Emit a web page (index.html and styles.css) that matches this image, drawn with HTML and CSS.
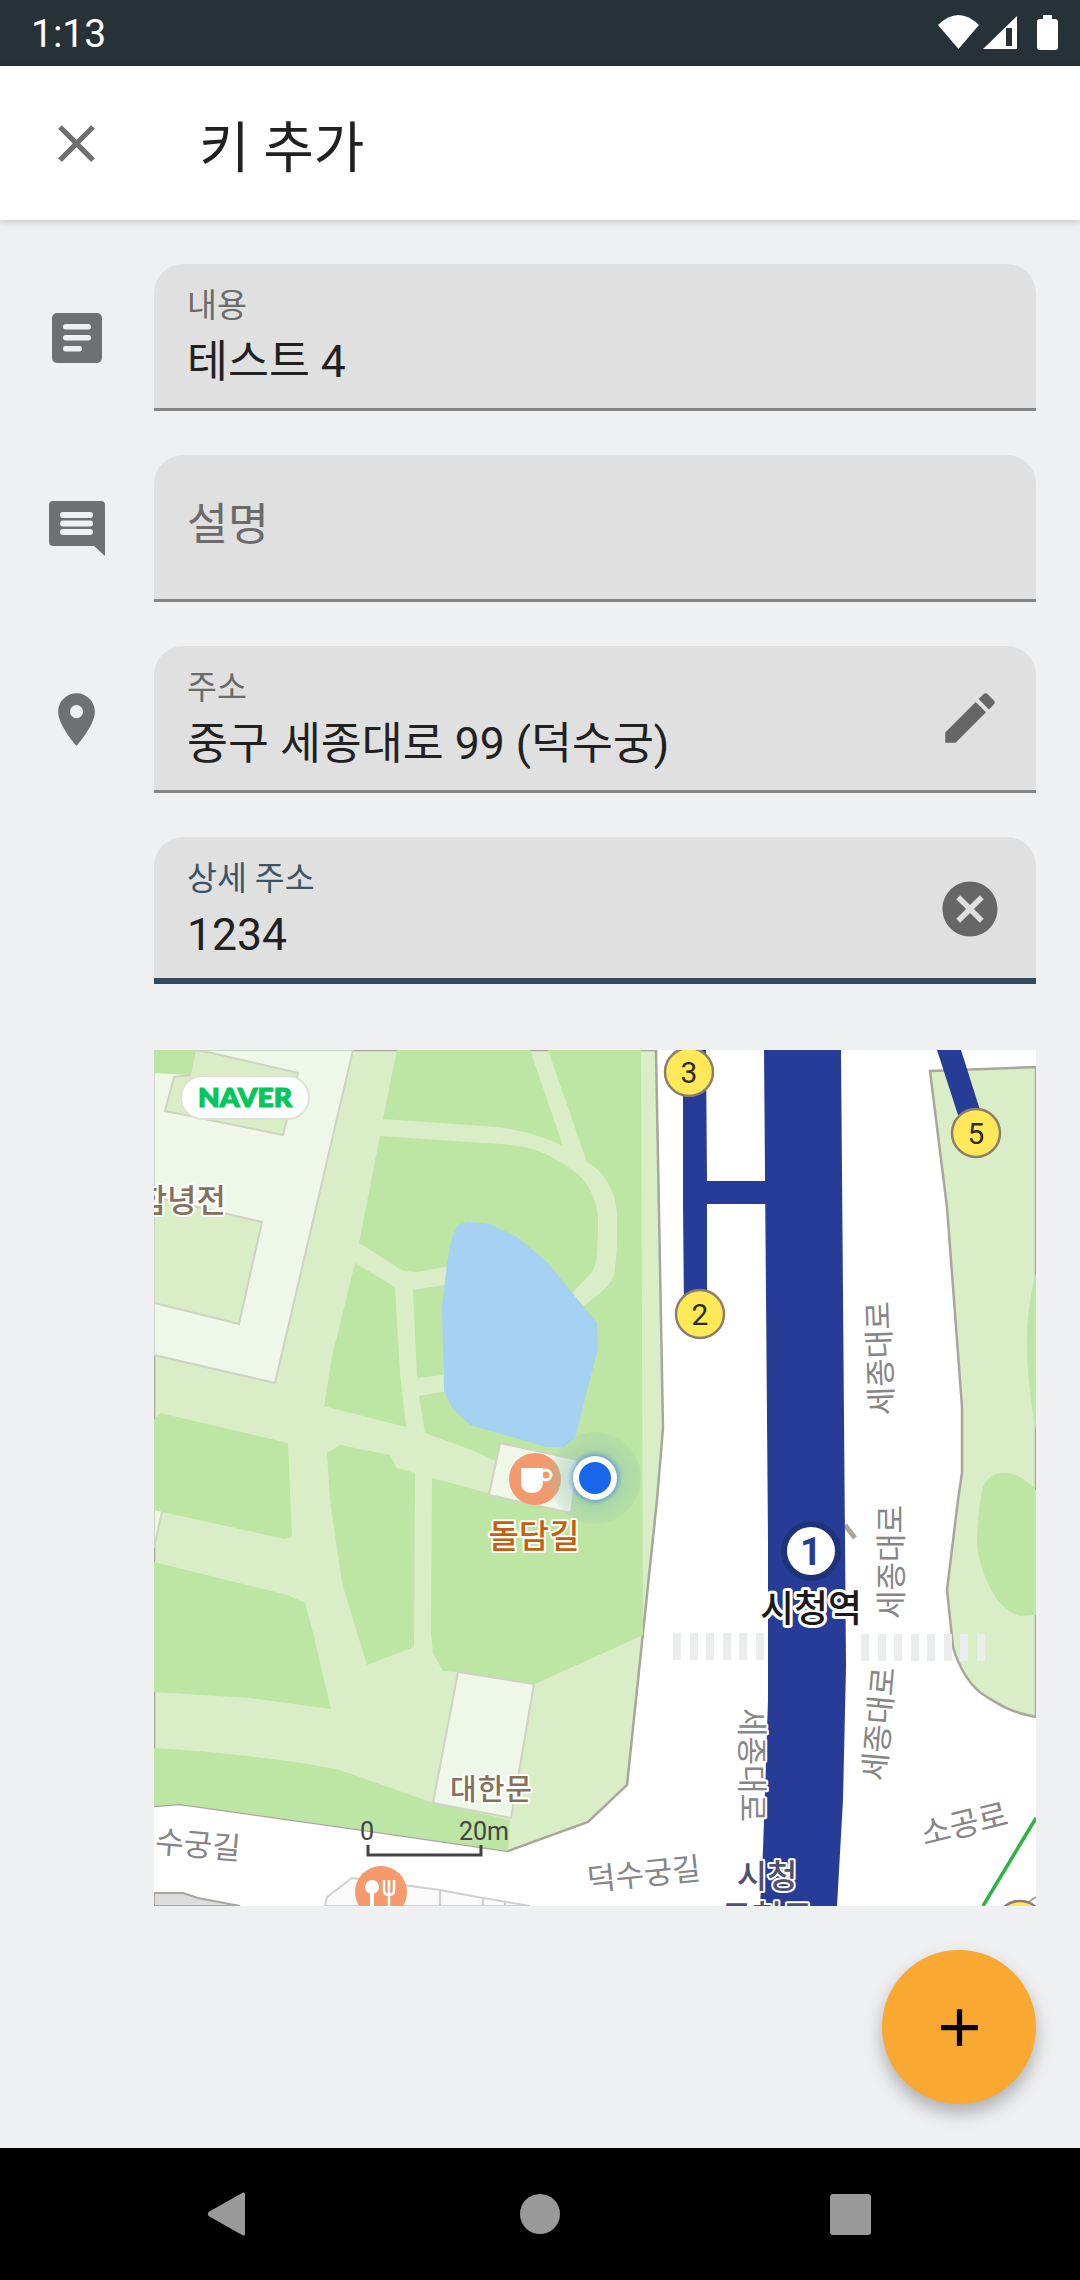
FILE: index.html
```html
<!DOCTYPE html>
<html lang="ko">
<head>
  <meta charset="UTF-8" />
  <meta name="viewport" content="width=device-width, initial-scale=1.0" />
  <title>키 추가</title>
  <link rel="stylesheet" href="styles.css">
</head>
<body>
  <div class="screen">
    <div class="status-bar">
      <span class="clock">1:13</span>
      <svg class="status-icons" width="120" height="66" viewBox="938 0 120 66">
        <path d="M938 25Q958.5 5 979 25L958.5 49Z" fill="#fff"/>
        <path d="M983 49L1017 16V49Z" fill="#fff"/>
        <rect x="1006" y="28" width="6" height="18" fill="#263238"/>
        <path d="M1043 15h9v4h3a3 3 0 0 1 3 3v25a3 3 0 0 1-3 3h-15a3 3 0 0 1-3-3v-25a3 3 0 0 1 3-3h3z" fill="#fff"/>
      </svg>
    </div>

    <div class="app-bar">
      <svg class="close-icon" viewBox="0 0 24 24" width="63" height="63">
        <path d="M19 6.41L17.59 5 12 10.59 6.41 5 5 6.41 10.59 12 5 17.59 6.41 19 12 13.41 17.59 19 19 17.59 13.41 12z"/>
      </svg>
      <h1 class="title">키 추가</h1>
    </div>

    <div class="content">
      <div class="row">
        <svg class="row-icon" viewBox="45 305 63 63" width="63" height="63">
          <rect x="52" y="312" width="50" height="50" rx="5" fill="#6f7073"/>
          <rect x="63" y="323" width="28" height="5.5" rx="2.7" fill="#eff0f2"/>
          <rect x="63" y="334" width="28" height="5.5" rx="2.7" fill="#eff0f2"/>
          <rect x="63" y="345" width="19" height="5.5" rx="2.7" fill="#eff0f2"/>
        </svg>
        <div class="field">
          <span class="field-label">내용</span>
          <span class="field-value">테스트 4</span>
        </div>
      </div>

      <div class="row">
        <svg class="row-icon" viewBox="45 496 63 63" width="63" height="63">
          <path d="M53 500H101a4 4 0 0 1 4 4V555L94 545H53a4 4 0 0 1-4-4V504a4 4 0 0 1 4-4z" fill="#6f7073"/>
          <rect x="60" y="511" width="33" height="6" rx="3" fill="#eff0f2"/>
          <rect x="60" y="519.5" width="33" height="6" rx="3" fill="#eff0f2"/>
          <rect x="60" y="528" width="33" height="6" rx="3" fill="#eff0f2"/>
        </svg>
        <div class="field field-empty">
          <span class="field-placeholder">설명</span>
        </div>
      </div>

      <div class="row">
        <svg class="row-icon" viewBox="0 0 24 24" width="63" height="63">
          <path d="M12 2C8.13 2 5 5.13 5 9c0 5.25 7 13 7 13s7-7.75 7-13c0-3.87-3.13-7-7-7zm0 9.5a2.5 2.5 0 0 1 0-5 2.5 2.5 0 0 1 0 5z" fill="#6f7073"/>
        </svg>
        <div class="field">
          <span class="field-label">주소</span>
          <span class="field-value">중구 세종대로 99 (덕수궁)</span>
          <svg class="field-action" viewBox="0 0 24 24" width="66" height="66">
            <path d="M3 17.25V21h3.75L17.81 9.94l-3.75-3.75L3 17.25zM20.71 7.04c.39-.39.39-1.02 0-1.41l-2.34-2.34c-.39-.39-1.02-.39-1.41 0l-1.83 1.83 3.75 3.75 1.83-1.83z"/>
          </svg>
        </div>
      </div>

      <div class="row">
        <div class="field field-focused">
          <span class="field-label">상세 주소</span>
          <span class="field-value">1234</span>
          <svg class="field-action" viewBox="0 0 24 24" width="66" height="66">
            <path d="M12 2C6.47 2 2 6.47 2 12s4.47 10 10 10 10-4.47 10-10S17.53 2 12 2zm5 13.59L15.59 17 12 13.41 8.41 17 7 15.59 10.59 12 7 8.41 8.41 7 12 10.59 15.59 7 17 8.41 13.41 12 17 15.59z"/>
          </svg>
        </div>
      </div>

      <!-- map is drawn in page coordinates, hence the viewBox origin -->
      <svg class="map" width="882" height="856" viewBox="154 1050 882 856">
        <defs>
          <radialGradient id="dotHalo">
            <stop offset="0.45" stop-color="#1a66ea" stop-opacity="0.55"/>
            <stop offset="0.6" stop-color="#8fc0b0" stop-opacity="0.4"/>
            <stop offset="1" stop-color="#8fc0b0" stop-opacity="0.15"/>
          </radialGradient>
        </defs>
        <rect x="154" y="1050" width="882" height="856" fill="#fff"/>

        <!-- bottom buildings -->
        <path d="M154 1893H183L198 1898L240 1906H154Z" fill="#dcdcdc" stroke="#a8a59e" stroke-width="2"/>
        <path d="M325 1906L327 1897L352 1878L440 1890L483 1898L530 1906Z" fill="#fafafa" stroke="#cfcfcf" stroke-width="2"/>
        <path d="M440 1890V1906M483 1898V1906M505 1902V1906" stroke="#cfcfcf" stroke-width="2"/>

        <!-- park -->
        <polygon points="154,1050 656,1050 663,1428 657,1500 627,1785 588,1822 508,1851 350,1828 180,1804 154,1806" fill="#d9edc7" stroke="#aaa69e" stroke-width="2.5"/>
        <polygon points="212,1050 353,1050 275,1383 154,1355 154,1050" fill="#eff7e9" stroke="#cfd3c4" stroke-width="2"/>
        <polygon points="195,1050 212,1053 298,1073 283,1135 165,1111 174,1077 190,1075" fill="#d9edc7" stroke="#cfd3c4" stroke-width="2"/>
        <polygon points="154,1197 262,1222 239,1324 154,1303" fill="#d9edc7" stroke="#cfd3c4" stroke-width="2"/>
        <polygon points="154,1050 195,1050 190,1075 154,1073" fill="#bde5a3"/>
        <polygon points="154,1498 165,1498 154,1548" fill="#eff7e9" stroke="#cfd3c4" stroke-width="2"/>

        <g fill="#bde5a3">
          <path d="M397 1050H530L563 1146C530 1130 500 1127 483 1126L383 1119Z"/>
          <path d="M380 1136L483 1143C510 1144 530 1147 543 1153C565 1163 583 1175 590 1190C598 1205 598 1215 598 1230C597 1250 598 1262 592 1272L573 1292L445 1267L417 1272C405 1272 400 1270 397 1267L359 1243Z"/>
          <path d="M355 1263L395 1287L400 1373L406 1427L324 1406L332 1357Z"/>
          <polygon points="413,1290 445,1285 443,1375 417,1378"/>
          <path d="M548 1050H641L643 1635L535 1684L458 1672L443 1671L433 1653L431 1633L432 1478L488 1493L497 1462C480 1452 450 1442 425 1433L419 1396L443 1392L500 1350L583 1307C600 1292 615 1285 615 1267C618 1250 617 1230 617 1213C615 1190 605 1172 587 1162Z"/>
          <path d="M154 1420L160 1413L288 1443L292 1537L285 1539L163 1512L154 1510Z"/>
          <path d="M327 1453L340 1445L390 1455L397 1468L415 1473L414 1647L367 1665L342 1583L330 1500Z"/>
          <path d="M154 1562L287 1595L305 1603L313 1633L331 1709L250 1698L154 1692Z"/>
          <path d="M154 1748C220 1752 290 1760 340 1770L433 1803L510 1820L508 1851L350 1828L180 1804L154 1806Z"/>
        </g>

        <path d="M467 1222L490 1224L517 1237L547 1262L597 1323L598 1348L575 1438L563 1447H547L470 1425L452 1408L444 1390L442 1307L447 1263L452 1237L458 1225Z" fill="#a5d1f3"/>

        <polygon points="500,1443 578,1460 571,1513 489,1495" fill="#eff7e9" stroke="#cfd3c4" stroke-width="2"/>
        <polygon points="458,1672 534,1684 511,1818 433,1803" fill="#eff7e9" stroke="#cfd3c4" stroke-width="2"/>

        <!-- park across the road -->
        <path d="M930 1071L1036 1067V1717C1010 1712 1000 1705 987 1697C970 1688 958 1665 953 1647L947 1590L958 1500L962 1473V1407L947 1207Z" fill="#d9edc7" stroke="#aaa69e" stroke-width="2.5"/>
        <path d="M1036 1273C1030 1295 1027 1320 1027 1340C1027 1370 1030 1400 1036 1430Z" fill="#bde5a3"/>
        <path d="M977 1540C978 1515 980 1500 983 1487C988 1475 998 1473 1005 1473C1018 1473 1028 1482 1036 1490V1615L1020 1616C1008 1612 998 1603 993 1593C985 1578 977 1560 977 1540Z" fill="#bde5a3"/>

        <!-- crosswalks -->
        <g fill="#ebeced">
          <rect x="673" y="1633" width="8" height="27"/><rect x="690" y="1633" width="8" height="27"/>
          <rect x="706" y="1633" width="8" height="27"/><rect x="723" y="1633" width="8" height="27"/>
          <rect x="739" y="1633" width="8" height="27"/><rect x="756" y="1633" width="8" height="27"/>
          <rect x="861" y="1634" width="8" height="27"/><rect x="878" y="1634" width="8" height="27"/>
          <rect x="894" y="1634" width="8" height="27"/><rect x="911" y="1634" width="8" height="27"/>
          <rect x="927" y="1634" width="8" height="27"/><rect x="944" y="1634" width="8" height="27"/>
          <rect x="960" y="1634" width="8" height="27"/><rect x="977" y="1634" width="8" height="27"/>
        </g>

        <path d="M845 1525L855 1538" stroke="#aaa69e" stroke-width="5"/>

        <!-- subway -->
        <g fill="#273c96">
          <path d="M764 1050H841L845 1540L846 1667L843 1800L837 1906H760L763 1850L768 1700V1540Z"/>
          <polygon points="683,1050 706,1050 707,1181 766,1181 766,1204 707,1204 707,1310 684,1310 683,1204"/>
          <polygon points="937,1050 961,1050 980,1110 958,1115"/>
        </g>
        <path d="M983 1906L1036 1818" stroke="#2fb344" stroke-width="3.5" fill="none"/>
        <path d="M1024 1905L1036 1897" stroke="#aaa69e" stroke-width="2" fill="none"/>

        <g class="exit">
          <circle cx="689" cy="1072" r="24"/>
          <circle cx="976" cy="1133" r="24"/>
          <circle cx="700" cy="1314" r="24"/>
          <circle cx="1020" cy="1925" r="24"/>
        </g>
        <text class="exit-num" x="689" y="1083">3</text>
        <text class="exit-num" x="976" y="1144">5</text>
        <text class="exit-num" x="700" y="1325">2</text>

        <circle cx="811" cy="1551" r="30" fill="#1f3379"/>
        <circle cx="811" cy="1551" r="24" fill="#fff"/>
        <text class="line-num" x="811" y="1565">1</text>

        <!-- labels -->
        <text class="lbl lbl-brown" x="226" y="1212" text-anchor="end" font-size="32">함녕전</text>
        <text class="lbl lbl-brown" x="450" y="1800" font-size="29" textLength="82">대한문</text>
        <text class="lbl lbl-orange" x="534" y="1548" text-anchor="middle" font-size="33">돌담길</text>
        <text class="lbl lbl-station" x="811" y="1622" text-anchor="middle" font-size="37">시청역</text>
        <text class="lbl lbl-road" transform="translate(891 1358) rotate(-92)" text-anchor="middle" font-size="31">세종대로</text>
        <text class="lbl lbl-road" transform="translate(902 1562) rotate(-90)" text-anchor="middle" font-size="31">세종대로</text>
        <text class="lbl lbl-road" transform="translate(890 1725) rotate(-85)" text-anchor="middle" font-size="31">세종대로</text>
        <text class="lbl lbl-road" transform="translate(741 1765) rotate(90)" text-anchor="middle" font-size="31">세종대로</text>
        <text class="lbl lbl-road" transform="translate(967 1835) rotate(-14)" text-anchor="middle" font-size="32">소공로</text>
        <text class="lbl lbl-road" transform="translate(645 1885) rotate(-6)" text-anchor="middle" font-size="31">덕수궁길</text>
        <text class="lbl lbl-road" transform="translate(197 1856) rotate(5)" text-anchor="middle" font-size="31">수궁길</text>
        <text class="lbl lbl-poi" x="767" y="1888" text-anchor="middle" font-size="33">시청</text>
        <text class="lbl lbl-poi" x="767" y="1929" text-anchor="middle" font-size="33">구청로</text>

        <!-- cafe marker -->
        <circle cx="535" cy="1479" r="26" fill="#f29a6e"/>
        <path d="M521 1468H543V1482C543 1490 537 1493 532 1493C526 1493 521 1490 521 1482Z" fill="#fff"/>
        <circle cx="546" cy="1475" r="5" fill="none" stroke="#fff" stroke-width="3"/>

        <!-- restaurant marker -->
        <circle cx="381" cy="1892" r="26" fill="#f59a6c"/>
        <circle cx="372" cy="1887" r="7" fill="#fff"/>
        <rect x="370" y="1887" width="4" height="20" fill="#fff"/>
        <path d="M384 1880V1890Q384 1895 389 1895Q394 1895 394 1890V1880M389 1880V1906" fill="none" stroke="#fff" stroke-width="2.5"/>

        <!-- location dot -->
        <circle cx="595" cy="1478" r="46" fill="url(#dotHalo)"/>
        <circle cx="595" cy="1478" r="22" fill="#fff"/>
        <circle cx="595" cy="1478" r="16" fill="#1a66ea"/>

        <!-- scale -->
        <path d="M368 1845V1855H481V1845" fill="none" stroke="#444" stroke-width="3"/>
        <text class="scale-text" x="367" y="1840" text-anchor="middle">0</text>
        <text class="scale-text" x="484" y="1840" text-anchor="middle">20m</text>

        <!-- naver badge -->
        <rect x="181" y="1076" width="128" height="43" rx="21.5" fill="#fff" stroke="#dfe3d6" stroke-width="2"/>
        <text class="naver" x="245" y="1107" text-anchor="middle" textLength="94" lengthAdjust="spacingAndGlyphs">NAVER</text>
      </svg>

      <button class="fab">
        <svg viewBox="0 0 24 24" width="63" height="63"><path d="M19 13h-6v6h-2v-6H5v-2h6V5h2v6h6v2z"/></svg>
      </button>
    </div>

    <div class="nav-bar">
      <svg width="38" height="46" viewBox="0 0 38 46"><path d="M36 1.500L1.500 21Q0 23 1.500 25L36 44.500Q38 45 38 43V3Q38 1 36 1.500Z" fill="#999"/></svg>
      <span class="nav-home"></span>
      <span class="nav-recent"></span>
    </div>
  </div>
</body>
</html>
```

FILE: styles.css
```css
body {
  margin: 0;
  font-family: Roboto, "Noto Sans CJK KR", sans-serif;
  background: #eff0f2;
}

.screen {
  position: relative;
  width: 1080px;
  height: 2280px;
  display: flex;
  flex-direction: column;
  overflow: hidden;
}

.status-bar {
  height: 66px;
  flex: none;
  background: #263238;
  display: flex;
  align-items: center;
  justify-content: space-between;
  padding: 0 22px 0 31px;
}

.clock {
  color: #fff;
  font-size: 39px;
  padding-top: 2px;
}

.app-bar {
  position: relative;
  z-index: 1;
  height: 154px;
  flex: none;
  background: #fff;
  display: flex;
  align-items: center;
  padding-left: 45px;
  box-shadow: 0 2px 8px rgba(0,0,0,0.18);
}

.close-icon {
  fill: #6f6f6f;
}

.title {
  margin: 0 0 0 91px;
  font-size: 55px;
  font-weight: 400;
  color: #212121;
}

.content {
  flex: 1;
  padding-top: 44px;
}

.row {
  display: flex;
  align-items: center;
  padding-left: 154px;
  position: relative;
  margin-bottom: 44px;
}

.row-icon {
  position: absolute;
  left: 45px;
}

.field {
  position: relative;
  box-sizing: border-box;
  width: 882px;
  height: 147px;
  padding: 23px 0 0 33px;
  background: #e0e0e0;
  border-bottom: 3px solid #858585;
  border-radius: 29px 29px 0 0;
  display: flex;
  flex-direction: column;
}

.field-empty {
  padding-top: 0;
  padding-bottom: 4px;
  justify-content: center;
}

.field-focused {
  border-bottom: 6px solid #34495a;
}

.field-focused .field-label {
  color: #3c5566;
}

.field-label {
  font-size: 32.5px;
  line-height: 38px;
  color: #6b6b6b;
}

.field-value {
  margin-top: 12px;
  font-size: 44.5px;
  line-height: 50px;
  color: #212121;
}

.field-placeholder {
  font-size: 44.5px;
  line-height: 50px;
  color: #6b6b6b;
}

.field-action {
  position: absolute;
  right: 33px;
  top: 39px;
  fill: #666;
}

.map {
  display: block;
  margin: 66px 0 0 154px;
}

.lbl {
  font-family: "Noto Sans CJK KR", sans-serif;
  paint-order: stroke;
  stroke: #fff;
  stroke-width: 4px;
  stroke-linejoin: round;
}

.lbl-brown { fill: #85705a; font-weight: 500; }
.lbl-orange { fill: #c55f0c; font-weight: 500; }
.lbl-road { fill: #868686; }
.lbl-poi { fill: #4f4f70; font-weight: 500; }
.lbl-station { fill: #1a1a1a; font-weight: 500; stroke-width: 6px; }

.exit circle {
  fill: #ffe959;
  stroke: #8c7d6d;
  stroke-width: 2.5;
}

.exit-num {
  font-size: 30px;
  fill: #2f2b1e;
  text-anchor: middle;
}

.line-num {
  font-size: 38px;
  font-weight: 700;
  fill: #273c96;
  text-anchor: middle;
}

.scale-text {
  font-size: 25px;
  fill: #444;
}

.naver {
  font-family: Lato, Roboto, sans-serif;
  font-size: 26px;
  font-weight: 900;
  fill: #03c75a;
  stroke: #03c75a;
  stroke-width: 1.2px;
}

.fab {
  position: absolute;
  left: 882px;
  top: 1950px;
  width: 154px;
  height: 154px;
  border: none;
  border-radius: 50%;
  padding: 0;
  background: #f9a932;
  display: flex;
  align-items: center;
  justify-content: center;
  box-shadow: 0 9px 18px rgba(0,0,0,0.28);
}

.nav-bar {
  height: 132px;
  flex: none;
  background: #000;
  display: flex;
  align-items: center;
  padding-left: 207px;
}

.nav-home {
  width: 40px;
  height: 40px;
  margin-left: 275px;
  border-radius: 50%;
  background: #999;
}

.nav-recent {
  width: 41px;
  height: 41px;
  margin-left: 270px;
  border-radius: 3px;
  background: #999;
}
```
